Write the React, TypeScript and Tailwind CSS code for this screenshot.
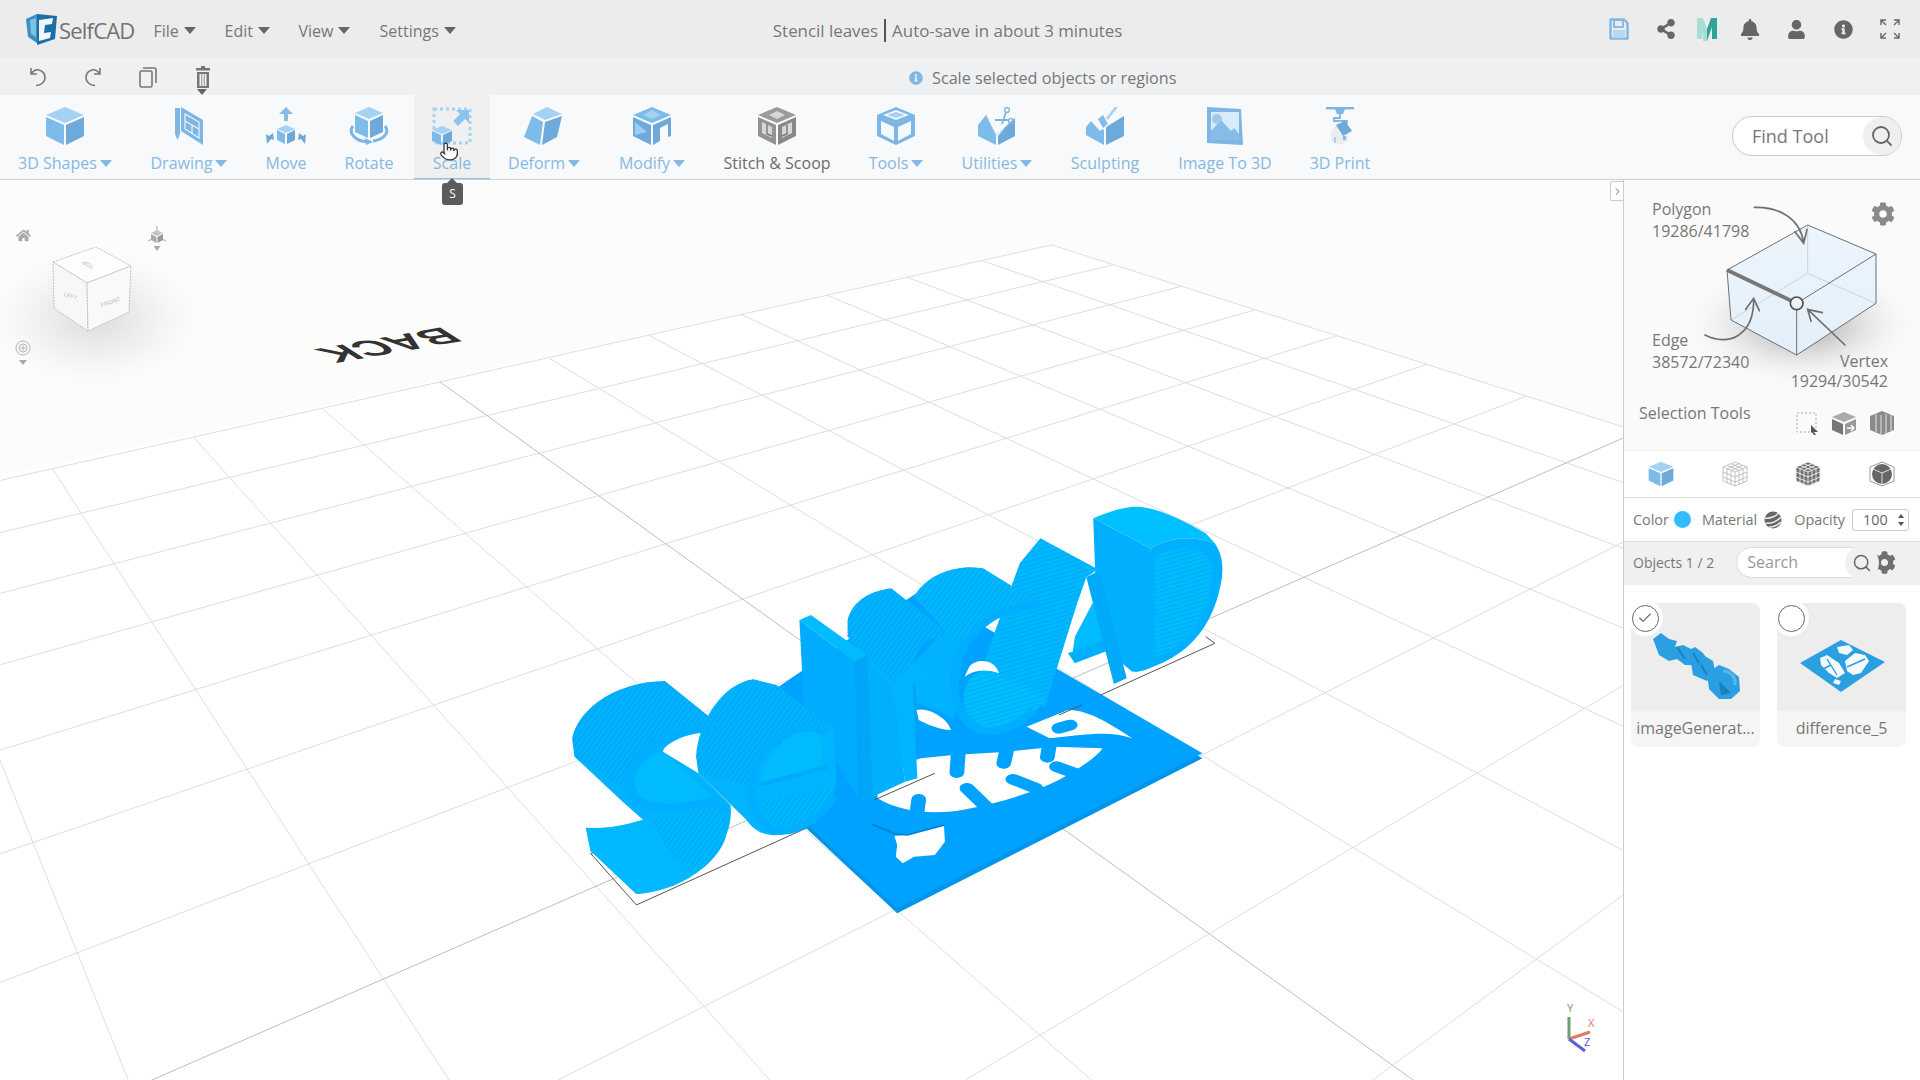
import { Search, Pointer, Check, ChevronRight } from "lucide-react";
import { FaBell, FaCog, FaHome, FaUser, FaShareAlt, FaInfoCircle } from "react-icons/fa";

// ground grid: maps grid cells on to the screen with a projective transform
const corners = [
  [1051.5, 244.9],
  [52.3, 468.7],
  [383.4, 979],
  [1638, 431.6],
];

function makeProjector() {
  const [[x0, y0], [x1, y1], [x2, y2], [x3, y3]] = corners;
  const dx1 = x1 - x2;
  const dx2 = x3 - x2;
  const sx = x0 - x1 + x2 - x3;
  const dy1 = y1 - y2;
  const dy2 = y3 - y2;
  const sy = y0 - y1 + y2 - y3;
  const det = dx1 * dy2 - dx2 * dy1;
  const g = (sx * dy2 - dx2 * sy) / det;
  const h = (dx1 * sy - sx * dy1) / det;
  const a = x1 - x0 + g * x1;
  const b = x3 - x0 + h * x3;
  const d = y1 - y0 + g * y1;
  const e = y3 - y0 + h * y3;
  return (u: number, v: number) => {
    const s = u / 10;
    const t = v / 7;
    const w = g * s + h * t + 1;
    if (w < 0.08) return null;
    return [(a * s + b * t + x0) / w, (d * s + e * t + y0) / w];
  };
}

function gridLines() {
  const project = makeProjector();
  const lines: { pts: string; major: boolean }[] = [];
  const build = (fn: (p: number) => number[] | null) => {
    const pts: string[] = [];
    for (let p = 0; p <= 14; p += 0.25) {
      const q = fn(p);
      if (q) pts.push(`${q[0].toFixed(1)},${q[1].toFixed(1)}`);
    }
    return pts.join(" ");
  };
  for (let i = 0; i <= 14; i++) {
    lines.push({ pts: build((p) => project(i, p)), major: i === 7 });
    lines.push({ pts: build((p) => project(p, i)), major: i === 7 });
  }
  return lines;
}

function Caret({ color = "border-t-[#666]", gap = "ml-[3px]" }: { color?: string; gap?: string }) {
  return <span className={`inline-block h-0 w-0 border-x-[6px] border-t-[7px] border-x-transparent ${gap} ${color}`} />;
}

function CubeIcon({ className = "h-[38px] w-[40px]" }: { className?: string }) {
  return (
    <svg viewBox="0 0 40 38" className={className}>
      <polygon points="20,0 39,8 20,16 1,8" fill="#a3d2f5" />
      <polygon points="1,10 19,18 19,38 1,29" fill="#7dbbe9" />
      <polygon points="21,18 39,10 39,29 21,38" fill="#6ea9d9" />
    </svg>
  );
}

function DrawingIcon() {
  return (
    <svg viewBox="0 0 40 38" className="h-[38px] w-[40px]">
      <rect x="6" y="1" width="5" height="26" fill="#7db6e4" />
      <polygon points="6,27 11,27 8.5,33" fill="#7db6e4" />
      <polygon points="12,0 34,13 34,38 12,24" fill="#7db6e4" />
      <path d="M16,7 L30,15 V31 L16,22 Z M16,14 L23,18 V26 M23,18 L30,22" fill="none" stroke="#f2f8fd" strokeWidth="1.1" />
    </svg>
  );
}

function MoveIcon() {
  return (
    <svg viewBox="0 0 40 38" className="h-[38px] w-[40px]">
      <polygon points="20,0 27,7 22,7 22,14 18,14 18,7 13,7" fill="#85bde8" />
      <polygon points="20,18 29,22 20,26 11,22" fill="#a3d2f5" />
      <polygon points="11,23 19,27 19,37 11,33" fill="#7dbbe9" />
      <polygon points="21,27 29,23 29,33 21,37" fill="#6ea9d9" />
      <polygon points="1,37 0,27 3,29 7,26 8,33 5,32" fill="#6ea9d9" />
      <polygon points="39,37 40,27 37,29 33,26 32,33 35,32" fill="#6ea9d9" />
    </svg>
  );
}

function RotateIcon() {
  return (
    <svg viewBox="0 0 40 38" className="h-[38px] w-[40px]">
      <polygon points="20,0 34,6 20,12 6,6" fill="#a3d2f5" />
      <polygon points="6,8 19,14 19,31 6,25" fill="#7dbbe9" />
      <polygon points="21,14 34,8 34,25 21,31" fill="#6ea9d9" />
      <path d="M4,19 C-2,27 8,34 18,35 M24,34 C32,33 42,27 36,19" fill="none" stroke="#7db6e4" strokeWidth="3" />
      <polygon points="16,31 24,35 17,38" fill="#7db6e4" />
    </svg>
  );
}

function ScaleIcon() {
  return (
    <svg viewBox="0 0 40 38" className="h-[38px] w-[40px]">
      <rect x="2" y="2" width="36" height="34" fill="none" stroke="#a3d2f5" strokeWidth="3" strokeDasharray="3 3" />
      <polygon points="24,3 37,3 37,16 33,12 26,19 21,14 28,7" fill="#8ec4ec" />
      <polygon points="10,19 20,23 10,27 0,23" fill="#a3d2f5" />
      <polygon points="0,24 9,28 9,38 0,34" fill="#7dbbe9" />
      <polygon points="11,28 20,24 20,34 11,38" fill="#6ea9d9" />
    </svg>
  );
}

function DeformIcon() {
  return (
    <svg viewBox="0 0 40 38" className="h-[38px] w-[40px]">
      <polygon points="23,0 38,7 21,13 9,7" fill="#a3d2f5" />
      <polygon points="8,9 19,15 16,38 0,30" fill="#7dbbe9" />
      <polygon points="21,15 38,9 33,30 18,38" fill="#6ea9d9" />
    </svg>
  );
}

function ModifyIcon() {
  return (
    <svg viewBox="0 0 40 38" className="h-[38px] w-[40px]">
      <polygon points="20,0 39,8 20,16 1,8" fill="#7dbbe9" />
      <polygon points="20,3 29,8 20,12 11,8" fill="#a3d2f5" />
      <polygon points="1,10 19,18 19,38 1,29" fill="#6ea9d9" />
      <polygon points="3,15 15,25 3,28" fill="#9ad0f5" />
      <polygon points="21,18 39,10 39,29 36,30 36,17 28,21 28,34 21,38" fill="#6ea9d9" />
    </svg>
  );
}

function StitchIcon() {
  return (
    <svg viewBox="0 0 40 38" className="h-[38px] w-[40px]">
      <polygon points="20,0 39,8 20,16 1,8" fill="#9b9b9b" />
      <polygon points="20,4 28,8 20,12 12,8" fill="#d6d6d6" />
      <polygon points="1,10 19,18 19,38 1,29" fill="#939393" />
      <polygon points="21,18 39,10 39,29 21,38" fill="#888" />
      <polygon points="5,15 15,20 15,31 5,26" fill="#d6d6d6" />
      <polygon points="25,20 35,15 35,26 25,31" fill="#d6d6d6" />
      <path d="M10,17 V27 L15,29 M30,18 V27 L25,29" stroke="#777" strokeWidth="1.4" fill="none" />
    </svg>
  );
}

function ToolsIcon() {
  return (
    <svg viewBox="0 0 40 38" className="h-[38px] w-[40px]">
      <polygon points="20,0 39,8 39,29 20,38 1,29 1,8" fill="#7db6e4" />
      <polygon points="20,3 33,8 20,13 7,8" fill="#f4f9fd" />
      <polygon points="5,14 18,20 18,34 5,27" fill="#f4f9fd" />
      <polygon points="22,20 35,14 35,27 22,34" fill="#f4f9fd" />
      <polygon points="20,5 29,8 20,11 11,8" fill="#a3d2f5" />
    </svg>
  );
}

function UtilitiesIcon() {
  return (
    <svg viewBox="0 0 40 38" className="h-[38px] w-[40px]">
      <polygon points="9,8 19,28 19,38 1,29 1,18" fill="#7dbbe9" />
      <polygon points="21,29 30,18 38,11 38,29 21,38" fill="#6ea9d9" />
      <path d="M9,8 L19,28 L38,12" fill="none" stroke="#9ccaea" strokeWidth="1" strokeDasharray="2 2" />
      <circle cx="30" cy="3" r="2.4" fill="none" stroke="#7db6e4" strokeWidth="1.4" />
      <circle cx="34" cy="14" r="2.4" fill="none" stroke="#7db6e4" strokeWidth="1.4" />
      <path d="M29,5 L25,17 M32,13 L18,13" stroke="#7db6e4" strokeWidth="1.8" />
    </svg>
  );
}

function SculptIcon() {
  return (
    <svg viewBox="0 0 40 38" className="h-[38px] w-[40px]">
      <polygon points="6,14 15,24 19,21 19,38 1,28 1,20" fill="#7dbbe9" />
      <polygon points="21,20 39,9 39,29 21,38" fill="#6ea9d9" />
      <polygon points="12,11 19,7 25,17 18,23" fill="#f4f9fd" />
      <polygon points="13,12 18,8 23,17 18,21" fill="#85bde8" />
      <path d="M22,12 L32,-1" stroke="#a3d2f5" strokeWidth="2.5" />
    </svg>
  );
}

function ImageIcon() {
  return (
    <svg viewBox="0 0 40 38" className="h-[38px] w-[40px]">
      <polygon points="2,0 36,2 38,38 2,36" fill="#7db6e4" />
      <polygon points="6,5 34,5 34,33 6,33" fill="#d7ebfa" />
      <polygon points="6,33 6,24 16,13 26,24 29,21 34,27 34,33" fill="#85bde8" />
      <circle cx="12" cy="12" r="5" fill="#9cc9ec" />
    </svg>
  );
}

function PrintIcon() {
  return (
    <svg viewBox="0 0 40 38" className="h-[38px] w-[40px]">
      <rect x="6" y="0" width="28" height="2.4" fill="#7db6e4" />
      <polygon points="15,2 25,2 23,7 17,7" fill="#7db6e4" />
      <path d="M20,7 V11 H14 V14 H27 V17" fill="none" stroke="#7db6e4" strokeWidth="1.8" />
      <polygon points="11,24 20,14 28,19 28,34 20,38 11,34" fill="#ececec" />
      <polygon points="16,18 25,14 32,24 23,29" fill="#6ea9d9" />
      <rect x="23" y="29" width="3" height="4" fill="#85bde8" />
      <rect x="14" y="30" width="2" height="6" fill="#a3d2f5" />
    </svg>
  );
}

const tools = [
  { label: "3D Shapes", icon: <CubeIcon />, caret: true, width: "w-[130px]" },
  { label: "Drawing", icon: <DrawingIcon />, caret: true, width: "w-[118px]" },
  { label: "Move", icon: <MoveIcon />, width: "w-[76px]" },
  { label: "Rotate", icon: <RotateIcon />, width: "w-[90px]" },
  { label: "Scale", icon: <ScaleIcon />, width: "w-[76px]", active: true },
  { label: "Deform", icon: <DeformIcon />, caret: true, width: "w-[108px]" },
  { label: "Modify", icon: <ModifyIcon />, caret: true, width: "w-[108px]" },
  { label: "Stitch & Scoop", icon: <StitchIcon />, width: "w-[142px]", gray: true },
  { label: "Tools", icon: <ToolsIcon />, caret: true, width: "w-[96px]" },
  { label: "Utilities", icon: <UtilitiesIcon />, caret: true, width: "w-[106px]" },
  { label: "Sculpting", icon: <SculptIcon />, width: "w-[110px]" },
  { label: "Image To 3D", icon: <ImageIcon />, width: "w-[130px]" },
  { label: "3D Print", icon: <PrintIcon />, width: "w-[100px]" },
];

function Logo() {
  return (
    <svg viewBox="0 0 32 32" className="h-[32px] w-[32px]">
      <polygon points="1,6 12,1 12,30 3,24" fill="#3f8fc4" />
      <polygon points="12,1 32,3 30,26 12,32" fill="#1b6fa8" />
      <path d="M14,7 L28,5 L27,11 L20,12 L19,20 L26,19 L25,25 L14,28 Z" fill="#f2f6f9" />
      <path d="M5,7 L11,5 V24 L6,21 Z" fill="#7fc0e6" />
    </svg>
  );
}

function TopBar() {
  return (
    <header className="flex h-[58px] items-center bg-[#ececed] text-[16px] text-[#777]">
      <div className="ml-[25px] flex items-center">
        <Logo />
        <span className="ml-[2px] pt-[3px] text-[22px] tracking-[-0.8px] text-[#6d747a]">SelfCAD</span>
      </div>
      <nav className="ml-[19px] flex items-center pt-[3px]">
        <span className="flex w-[71px] items-center">File<Caret gap="ml-[5px]" /></span>
        <span className="flex w-[74px] items-center">Edit<Caret gap="ml-[5px]" /></span>
        <span className="flex w-[81px] items-center">View<Caret gap="ml-[5px]" /></span>
        <span className="flex items-center">Settings<Caret gap="ml-[5px]" /></span>
      </nav>
      <div className="ml-[317px] flex items-center pt-[3px] text-[16.9px]">
        <span>Stencil leaves</span>
        <span className="mx-[6px] h-[23px] w-[2px] bg-[#555]" />
        <span>Auto-save in about 3 minutes</span>
      </div>
      <div className="ml-auto mr-[20px] flex items-center text-[#666]">
        <svg viewBox="0 0 20 24" className="h-[24px] w-[20px]">
          <path d="M1.5,2.5 H15 L18.5,6 V21.5 H1.5 Z" fill="none" stroke="#7fb8e6" strokeWidth="2.4" strokeLinejoin="round" />
          <rect x="5" y="3" width="9" height="7" fill="none" stroke="#7fb8e6" strokeWidth="1.8" />
          <rect x="4" y="13" width="12" height="8" fill="#b5d7f2" />
        </svg>
        <FaShareAlt className="ml-[27px] h-[20px] w-[20px]" />
        <svg viewBox="0 0 20 24" className="ml-[21px] h-[24px] w-[20px]">
          <polygon points="0,1 6,1 10,12 10,24 6,24 6,14 5,22 0,22" fill="#a9dcd4" />
          <polygon points="10,12 14,1 20,1 20,22 15,22 15,10 10,24" fill="#2fa595" />
        </svg>
        <FaBell className="ml-[23px] h-[21px] w-[20px]" />
        <FaUser className="ml-[27px] h-[19px] w-[19px]" />
        <FaInfoCircle className="ml-[28px] h-[19px] w-[19px]" />
        <svg viewBox="0 0 20 20" className="ml-[27px] h-[20px] w-[20px]" fill="none" stroke="#666" strokeWidth="1.4">
          <path d="M1,6 V1 H6 M1,1 L6,6 M14,1 H19 V6 M19,1 L14,6 M1,14 V19 H6 M1,19 L6,14 M14,19 H19 V14 M19,19 L14,14" />
        </svg>
      </div>
    </header>
  );
}

function ActionBar() {
  return (
    <div className="relative flex h-[37px] items-center bg-[#eff0f1] text-[#777]">
      <div className="ml-[29px] flex items-center">
        <svg viewBox="0 0 18 20" className="h-[20px] w-[18px]" fill="none" stroke="#777" strokeWidth="1.6">
          <path d="M2,1 V7 H8" />
          <path d="M2.5,6.5 C5,3 8,2.5 10,3 C14,4 16,7.5 16,11 C16,15 12,18.5 7,18.5" />
        </svg>
        <svg viewBox="0 0 18 20" className="ml-[37px] h-[20px] w-[18px]" fill="none" stroke="#777" strokeWidth="1.6">
          <path d="M16,1 V7 H10" />
          <path d="M15.5,6.5 C13,3 10,2.5 8,3 C4,4 2,7.5 2,11 C2,15 6,18.5 11,18.5" />
        </svg>
        <svg viewBox="0 0 18 22" className="ml-[37px] h-[22px] w-[18px]" fill="none" stroke="#777" strokeWidth="1.6">
          <rect x="1" y="5" width="12" height="16" rx="1.5" />
          <path d="M4,2 H15.5 a1.5,1.5 0 0 1 1.5,1.5 V17" />
        </svg>
        <svg viewBox="0 0 14 22" className="ml-[39px] h-[22px] w-[14px]" fill="#777">
          <path d="M5,0 H9 V2 H14 V4.5 H0 V2 H5 Z" />
          <path d="M1,6 H13 V22 H1 Z M3.5,8 V20 H5.5 V8 Z M6.2,8 V20 H7.8 V8 Z M8.5,8 V20 H10.5 V8 Z" fillRule="evenodd" />
        </svg>
      </div>
      <span className="absolute left-[197px] top-[31px] h-0 w-0 border-x-[5px] border-t-[6px] border-x-transparent border-t-[#666]" />
      <div className="ml-[699px] flex items-center pt-[3px] text-[16.2px]">
        <FaInfoCircle className="h-[14px] w-[14px] text-[#7fb8e6]" />
        <span className="ml-[9px]">Scale selected objects or regions</span>
      </div>
    </div>
  );
}

function ToolBar() {
  return (
    <div className="flex h-[85px] items-stretch border-b border-[#cfcfcf] bg-[#f8f9fa]">
      {tools.map((tool) => (
        <div
          key={tool.label}
          className={`relative flex shrink-0 flex-col items-center pt-[12px] ${tool.width} ${
            tool.active ? "bg-[#f0f0f0] shadow-[inset_0_-1px_0_#8cc0ea]" : ""
          } ${tool.gray ? "text-[#6b6b6b]" : "text-[#85b8e2]"}`}
        >
          {tool.icon}
          <span className="mt-[7px] flex items-center text-[16px] leading-[22px]">
            {tool.label}
            {tool.caret && <Caret color="border-t-[#85b8e2]" />}
          </span>
          {tool.active && (
            <>
              <Pointer className="absolute left-[25px] top-[45px] h-[23px] w-[20px] fill-white text-[#333]" strokeWidth={1.5} />
              <span className="absolute left-[28px] top-[88px] z-10 flex h-[22px] w-[21px] items-center justify-center rounded-[3px] bg-[#5c5c5c] text-[12px] text-white">
                S
              </span>
              <span className="absolute left-[33px] top-[83px] z-10 h-0 w-0 border-x-[5px] border-b-[5px] border-x-transparent border-b-[#5c5c5c]" />
            </>
          )}
        </div>
      ))}
      <div className="ml-auto mr-[18px] flex items-center pb-[2px]">
        <div className="flex h-[40px] w-[170px] items-center rounded-full border border-[#c9c9c9] bg-white pl-[19px] text-[18px] text-[#777]">
          Find Tool
          <span className="ml-auto flex h-[38px] w-[38px] items-center justify-center rounded-full bg-[#efefef]">
            <Search className="h-[24px] w-[24px] text-[#666]" strokeWidth={1.8} />
          </span>
        </div>
      </div>
    </div>
  );
}

function ModelDrawing() {
  return (
    <g transform="translate(540 480) scale(0.4591 0.3333)">
      {/* bounding box under the model */}
      <path d="M110,1120 L210,1275 L1470,490 L1450,470" fill="none" stroke="#555" vectorEffect="non-scaling-stroke" />
      <path d="M110,1120 L135,1115" fill="none" stroke="#555" vectorEffect="non-scaling-stroke" />
      {/* plate */}
      <polygon points="370,775 830,345 1443,835 778,1300" fill="#0095e8" />
      <polygon points="370,760 830,330 1443,820 778,1285" fill="#00a2ff" />
      <path d="M735,955 C735,920 745,880 770,860 L830,835 L900,825 L1020,815 L1120,800 L1225,805 C1215,830 1170,870 1130,900 C1070,940 1000,970 920,990 C860,1003 790,1000 735,955 Z" fill="#fff" />
      <path d="M1060,740 L1150,690 C1190,690 1230,720 1290,775 C1240,750 1180,765 1110,775 Z" fill="#fff" />
      <path d="M820,690 C850,680 890,720 895,750 C870,750 840,730 825,720 Z" fill="#fff" />
      <path d="M728,960 L860,880 M1130,705 L1180,675" stroke="#555" fill="none" vectorEffect="non-scaling-stroke" />
      <g stroke="#00a2ff" strokeWidth="32" strokeLinecap="round" fill="none">
        <path d="M912,800 L908,878" />
        <path d="M1020,790 L1010,850" />
        <path d="M1110,790 L1105,832" />
        <path d="M1125,860 L1165,880" />
        <path d="M1030,898 L1080,925" />
        <path d="M930,925 L975,985" />
        <path d="M825,958 L820,1010" />
        <path d="M1130,745 L1155,735" />
      </g>
      <path d="M772,1068 L800,1065 L880,1038 L882,1085 L860,1125 L815,1130 L790,1150 L775,1130 L778,1095 Z" fill="#fff" />
      <path d="M722,1032 L770,1060 L800,1065 L880,1035" stroke="#0082d0" strokeWidth="5" fill="none" />

      {/* D */}
      <path d="M1205,115 L1330,205 L1320,570 L1290,575 L1215,490 Z" fill="#00b0ff" />
      <path d="M1205,115 C1240,95 1270,80 1300,80 C1340,80 1400,120 1450,160 L1470,190 C1430,170 1380,165 1330,205 Z" fill="#00c0ff" />
      <path d="M1330,205 C1380,165 1430,170 1470,190 C1490,230 1490,280 1480,330 C1465,420 1430,490 1380,530 C1350,555 1320,570 1295,577 Z" fill="#00b0ff" />
      <path d="M1340,230 C1380,195 1430,195 1450,225 C1470,255 1470,300 1450,380 C1430,450 1390,510 1340,535 Z" fill="#00bcff" />
      <path d="M1340,230 C1380,195 1430,195 1450,225 C1470,255 1470,300 1450,380 C1430,450 1390,510 1340,535 Z" fill="url(#stripesB)" />

      {/* A */}
      <path d="M1045,250 L1090,175 L1215,268 L1190,292 L1170,370 L1120,590 L1100,680 L950,610 Z" fill="#00b8ff" />
      <path d="M1045,250 L1090,175 L1215,268 L1190,292 L1170,370 L1120,590 L1100,680 L950,610 Z" fill="url(#stripesB)" />
      <path d="M1165,470 L1215,340 L1230,480 L1160,520 Z" fill="#00bcff" />
      <path d="M1150,520 L1230,480 L1240,510 L1165,550 Z" fill="#00aeff" />
      <path d="M1190,292 L1217,272 L1278,595 L1250,612 Z" fill="#00aaf8" />

      {/* c */}
      <polygon points="815,550 880,450 925,500 900,720 880,700 820,670" fill="#00b2ff" />
      <path d="M815,350 C840,290 890,262 940,262 L965,265 L1090,370 L1060,385 C1000,390 950,430 925,500 L880,450 Z" fill="#00b8ff" />
      <path d="M815,350 C840,290 890,262 940,262 L965,265 L1090,370 L1060,385 C1000,390 950,430 925,500 L880,450 Z" fill="url(#stripesA)" />
      <path d="M935,560 C950,535 990,535 1000,580 C970,565 945,570 925,590 Z" fill="#fff" />
      <path d="M925,630 C930,590 960,565 985,575 L1100,660 C1080,700 1030,760 975,745 C935,730 915,680 925,630 Z" fill="#00beff" />
      <path d="M925,630 C930,590 960,565 985,575 L1100,660 C1080,700 1030,760 975,745 C935,730 915,680 925,630 Z" fill="url(#stripesB)" />
      <path d="M1085,375 C1020,375 950,420 915,520 C890,600 900,700 950,745 C990,770 1040,740 1075,690" fill="none" stroke="#00aeff" strokeWidth="20" />

      {/* f */}
      <polygon points="685,470 770,610 795,905 725,950 712,525" fill="#00b0ff" />
      <path d="M670,420 C680,370 710,335 765,325 L880,450 L878,470 C845,470 820,500 815,550 L860,565 L865,590 L812,612 L822,895 L795,905 L770,640 L765,620 L670,470 Z" fill="#00b4ff" />
      <path d="M670,420 C680,370 710,335 765,325 L880,450 L878,470 C845,470 820,500 815,550 L770,610 L670,470 Z" fill="url(#stripesA)" />

      {/* l */}
      <polygon points="565,420 685,545 695,960 575,680" fill="#00acff" />
      <polygon points="565,420 590,405 712,525 685,545" fill="#00bbff" />
      <polygon points="685,545 712,525 725,950 700,965" fill="#00a6f8" />

      {/* e */}
      <path d="M340,830 C345,720 400,610 465,598 L515,615 L640,745 L645,900 C640,980 600,1040 540,1060 C500,1075 470,1060 450,1020 L345,880 Z" fill="#00b4ff" />
      <path d="M340,830 C345,720 400,610 465,598 L515,615 L640,745 L600,760 C530,770 480,820 460,920 L345,880 Z" fill="url(#stripesA)" />
      <path d="M480,905 C490,830 530,760 590,750 C610,750 615,770 615,860 Z" fill="#00bcff" />
      <path d="M485,960 L640,925 C620,990 570,1040 525,1040 C495,1040 480,1000 485,960 Z" fill="#00b8ff" />
      <path d="M485,960 L640,925 C620,990 570,1040 525,1040 C495,1040 480,1000 485,960 Z" fill="url(#stripesA)" />
      <path d="M620,760 C570,720 490,770 465,880 C450,960 470,1040 520,1055 C570,1060 620,1000 640,950" fill="none" stroke="#00aeff" strokeWidth="18" />
      <path d="M475,915 L625,862" stroke="#00aafa" strokeWidth="12" />

      {/* S */}
      <path d="M70,775 C85,680 170,605 272,603 L385,728 L390,750 C330,750 270,790 268,815 L345,880 L415,975 C425,1100 340,1215 210,1242 L110,1112 L100,1043 C140,1050 190,1035 225,1020 L180,965 L75,830 Z" fill="#00b2ff" />
      <path d="M70,775 C85,680 170,605 272,603 L385,728 L300,745 C250,770 210,810 190,930 L75,830 Z" fill="url(#stripesA)" />
      <path d="M268,815 L375,950 L300,975 C240,990 205,960 205,920 C205,870 230,830 268,815 Z" fill="#00bcff" />
      <path d="M100,1043 C150,1050 200,1030 235,1015 C290,1010 340,1000 385,960 C420,1000 425,1100 340,1180 C300,1220 250,1240 210,1242 L110,1112 Z" fill="#00b8ff" />
      <path d="M240,1020 C290,1010 340,1000 385,960 C420,1000 425,1100 340,1180 L290,1130 Z" fill="url(#stripesA)" />
      <path d="M385,745 C300,745 205,800 195,900 C190,990 280,990 330,975 C370,960 395,975 402,1000" fill="none" stroke="#00aeff" strokeWidth="22" />
    </g>
  );
}

function Viewport() {
  const lines = gridLines();
  return (
    <div className="relative min-w-0 flex-1 overflow-hidden bg-[#fcfcfa]">
      <svg viewBox="0 180 1623 900" className="block h-full w-full">
        <defs>
          <pattern id="stripesA" width="10" height="10" patternUnits="userSpaceOnUse" patternTransform="rotate(28)">
            <rect width="3" height="10" fill="#0090e0" opacity="0.4" />
          </pattern>
          <pattern id="stripesB" width="12" height="12" patternUnits="userSpaceOnUse" patternTransform="rotate(68)">
            <rect width="3" height="12" fill="#0090e0" opacity="0.4" />
          </pattern>
          <radialGradient id="cubeShadow">
            <stop offset="0" stopColor="#bdbdbd" stopOpacity="0.55" />
            <stop offset="0.55" stopColor="#d8d8d8" stopOpacity="0.3" />
            <stop offset="1" stopColor="#f4f4f4" stopOpacity="0" />
          </radialGradient>
        </defs>
        <polygon points="-40,485 1051.5,244.9 1660,439 1660,1100 -40,1100" fill="#fff" />
        {lines.filter((l) => !l.major).map((l, i) => (
          <polyline key={i} points={l.pts} fill="none" stroke="#dedede" strokeWidth="1" />
        ))}
        {lines.filter((l) => l.major).map((l, i) => (
          <polyline key={i} points={l.pts} fill="none" stroke="#bebebe" strokeWidth="1" />
        ))}
        <ellipse cx="95" cy="318" rx="110" ry="72" fill="url(#cubeShadow)" />
        {/* orientation cube */}
        <g stroke="#aaa" strokeWidth="0.7" strokeDasharray="2 1" fill="#fdfdfd">
          <polygon points="53,262 96,247 131,266 87,283" />
          <polygon points="53,262 87,283 88,331 54,308" fill="#f7f7f7" />
          <polygon points="87,283 131,266 129,312 88,331" fill="#f9f9f9" />
        </g>
        <g fontFamily="Liberation Sans, sans-serif" fontSize="6" fill="#bbb">
          <text x="84" y="267" transform="rotate(-150 89 265)">TOP</text>
          <text x="64" y="297" transform="rotate(18 68 295)" fontSize="5.5">LEFT</text>
          <text x="100" y="305" transform="rotate(-20 108 302)">FRONT</text>
        </g>
        <text
          transform="matrix(-1.5 0.26 -1.05 -0.66 443 327)"
          fontFamily="Liberation Sans, sans-serif"
          fontWeight="700"
          fontSize="30"
          fill="#333"
        >
          BACK
        </text>
        <ModelDrawing />
        {/* axis gizmo */}
        <path d="M1569,1039 V1017" stroke="#6aa06a" strokeWidth="3" />
        <path d="M1569,1039 L1590,1032" stroke="#e0796c" strokeWidth="3" />
        <path d="M1569,1039 L1585,1051" stroke="#5a60d8" strokeWidth="3" />
        <g fontFamily="Open Sans, sans-serif" fontSize="11">
          <text x="1567" y="1012" fill="#6aa06a">Y</text>
          <text x="1588" y="1027" fill="#e0796c">X</text>
          <text x="1584" y="1046" fill="#5a60d8">Z</text>
        </g>
      </svg>
      <FaHome className="absolute left-[16px] top-[48px] h-[15px] w-[15px] text-[#aaa]" />
      <svg viewBox="0 0 18 26" className="absolute left-[148px] top-[46px] h-[26px] w-[18px]">
        <path d="M9,0 V5 M0,15 L4,13 M18,15 L14,13" stroke="#aaa" />
        <polygon points="9,4 15,7 9,10 3,7" fill="#c4c4c4" />
        <polygon points="3,8 8.5,11 8.5,17 3,14" fill="#aaa" />
        <polygon points="9.5,11 15,8 15,14 9.5,17" fill="#999" />
        <polygon points="5.5,20 12.5,20 9,25" fill="#aaa" />
      </svg>
      <svg viewBox="0 0 16 28" className="absolute left-[15px] top-[160px] h-[28px] w-[16px]" fill="none" stroke="#b5b5b5">
        <circle cx="8" cy="8" r="7" />
        <circle cx="8" cy="8" r="4" />
        <path d="M8,5.5 V10.5 M5.5,8 H10.5" />
        <polygon points="4,20 12,20 8,25" fill="#aaa" stroke="none" />
      </svg>
      <span className="absolute right-0 top-[1px] flex h-[20px] w-[13px] items-center justify-center rounded-l-[2px] border border-r-0 border-[#ccc] bg-white text-[#666]">
        <ChevronRight className="h-[11px] w-[11px]" />
      </span>
    </div>
  );
}

function SelectionCube() {
  return (
    <svg viewBox="0 0 900 780" className="absolute left-[-3px] top-0 h-[260px] w-[300px]">
      <defs>
        <radialGradient id="panelShadow">
          <stop offset="0" stopColor="#8f8f8f" stopOpacity="0.9" />
          <stop offset="0.5" stopColor="#c4c4c4" stopOpacity="0.5" />
          <stop offset="1" stopColor="#f5f5f5" stopOpacity="0" />
        </radialGradient>
        <linearGradient id="faceFill" x1="0" y1="0" x2="0" y2="1">
          <stop offset="0" stopColor="#edf5fc" />
          <stop offset="1" stopColor="#e3eff9" />
        </linearGradient>
      </defs>
      <ellipse cx="540" cy="430" rx="350" ry="190" fill="url(#panelShadow)" />
      <polygon points="318,270 560,135 765,222 765,370 527,525 330,420" fill="url(#faceFill)" />
      <g fill="none" stroke="#c4ccd4" strokeWidth="2.5">
        <path d="M560,135 V280 L330,420 M560,280 L765,370" />
      </g>
      <g fill="none" stroke="#6b7075" strokeWidth="3">
        <path d="M318,270 L560,135 L765,222 L527,370 M765,222 L765,370 L527,525 L330,420 L318,270 M527,370 V525" />
      </g>
      <path d="M318,270 L527,370" stroke="#777" strokeWidth="11" />
      <circle cx="527" cy="370" r="19" fill="#eef2f5" stroke="#4f5358" strokeWidth="5" />
      <g fill="none" stroke="#6f6f6f" strokeWidth="5" strokeLinecap="round">
        <path d="M400,82 C480,80 540,120 548,190 M522,155 L548,190 L558,148" />
        <path d="M252,465 C320,500 400,470 398,355 M374,388 L398,355 L415,392" />
        <path d="M672,495 L560,388 M604,398 L560,388 L570,424" />
      </g>
    </svg>
  );
}

function ObjectCard({ name, selected, children }: { name: string; selected?: boolean; children: React.ReactNode }) {
  return (
    <div className="relative h-[144px] w-[129px] overflow-hidden rounded-[8px] bg-[#f5f5f5]">
      <div className="h-[108px] bg-[#ededed]">{children}</div>
      <div className="flex h-[34px] items-center justify-center text-[16px] text-[#777]">{name}</div>
      <span className="absolute left-[-4px] top-[-3px] flex h-[36px] w-[36px] items-center justify-center rounded-full bg-white">
        <span className="flex h-[27px] w-[27px] items-center justify-center rounded-full border border-[#666] bg-white">
          {selected && <Check className="h-[16px] w-[16px] text-[#666]" strokeWidth={1.6} />}
        </span>
      </span>
    </div>
  );
}

function RightPanel() {
  return (
    <aside className="flex w-[297px] shrink-0 flex-col border-l border-[#ccc] bg-white text-[#777]">
      <section className="relative h-[271px] border-b border-[#eee] bg-[#fafafa]">
        <SelectionCube />
        <div className="absolute left-[28px] top-[18px] text-[16px] leading-[22px]">
          Polygon
          <br />
          19286/41798
        </div>
        <div className="absolute left-[28px] top-[149px] text-[16px] leading-[22px]">
          Edge
          <br />
          38572/72340
        </div>
        <div className="absolute right-[32px] top-[171px] text-right text-[16px] leading-[20px]">
          Vertex
          <br />
          19294/30542
        </div>
        <FaCog className="absolute left-[247px] top-[22px] h-[24px] w-[24px] text-[#8a8a8a]" />
        <div className="absolute left-[15px] top-[221px] text-[16px]">Selection Tools</div>
        <div className="absolute right-[26px] top-[231px] flex items-center">
          <svg viewBox="0 0 24 24" className="h-[24px] w-[24px]">
            <rect x="2" y="2" width="19" height="19" fill="none" stroke="#aaa" strokeDasharray="2 2" />
            <polygon points="16,14 23,21 19,21 21,24 19,24 17,21 16,22" fill="#555" />
          </svg>
          <svg viewBox="0 0 24 24" className="ml-[13px] h-[24px] w-[24px]">
            <polygon points="12,1 24,6 12,11 0,6" fill="#aaa" />
            <polygon points="0,8 11,13 11,24 0,19" fill="#777" />
            <polygon points="13,13 24,8 24,19 13,24" fill="#999" />
            <path d="M15,17 H22 M19,14 L22,17 L19,20" stroke="#fff" fill="none" strokeWidth="1.4" />
          </svg>
          <svg viewBox="0 0 24 24" className="ml-[14px] h-[24px] w-[24px]">
            <polygon points="12,0 24,5 24,19 12,24 0,19 0,5" fill="#8a8a8a" />
            <path d="M6,3 V21 M11,4 V24 M16,3 V22 M21,3 V20" stroke="#e4e4e4" />
          </svg>
        </div>
      </section>

      <div className="flex h-[47px] items-center justify-around border-b border-[#ddd] pr-[1px]">
        <CubeIcon className="h-[26px] w-[26px]" />
        <svg viewBox="0 0 26 26" className="h-[26px] w-[26px]" fill="none" stroke="#b5b5b5" strokeWidth="0.8">
          <polygon points="13,1 25,6 25,20 13,25 1,20 1,6" />
          <path d="M1,6 L13,11 L25,6 M13,11 V25 M5,4.3 L17,9.3 M9,2.7 L21,7.7 M17,2.7 L5,7.7 M21,4.3 L9,9.3 M5,8 V22 M9,9.5 V23.5 M17,9.5 V23.5 M21,8 V22 M1,11 L13,16 L25,11 M1,16 L13,21 L25,16" />
        </svg>
        <svg viewBox="0 0 26 26" className="h-[26px] w-[26px]" fill="#707070" stroke="#eee" strokeWidth="0.9">
          <polygon points="13,1 25,6 25,20 13,25 1,20 1,6" />
          <path d="M1,6 L13,11 L25,6 M13,11 V25 M5,4.3 L17,9.3 M9,2.7 L21,7.7 M17,2.7 L5,7.7 M21,4.3 L9,9.3 M5,8 V22 M9,9.5 V23.5 M17,9.5 V23.5 M21,8 V22 M1,11 L13,16 L25,11 M1,16 L13,21 L25,16" fill="none" />
        </svg>
        <svg viewBox="0 0 26 26" className="h-[26px] w-[26px]">
          <polygon points="13,1 25,6 25,20 13,25 1,20 1,6" fill="none" stroke="#999" />
          <circle cx="13" cy="13" r="10" fill="#666" />
          <path d="M4,8 L13,12 L22,8 M13,12 V23" stroke="#ddd" fill="none" />
        </svg>
      </div>

      <div className="flex h-[44px] items-center border-b border-[#ddd] pl-[9px] text-[14.4px]">
        Color
        <span className="ml-[5px] h-[17px] w-[17px] rounded-full bg-[#33bbff]" />
        <span className="ml-[11px]">Material</span>
        <svg viewBox="0 0 18 18" className="ml-[7px] h-[18px] w-[18px]">
          <circle cx="9" cy="9" r="8.5" fill="#666" />
          <path d="M1,7 C6,8 12,5 15,2 M1.5,12 C7,13 13,10 17,6 M5,16 C9,16 14,14 16.5,11" stroke="#eee" strokeWidth="1.5" fill="none" />
        </svg>
        <span className="ml-[12px]">Opacity</span>
        <div className="ml-[7px] flex h-[22px] w-[57px] items-center rounded-[3px] border border-[#ccc] pl-[10px] text-[#666]">
          100
          <span className="ml-auto mr-[4px] flex flex-col gap-[4px]">
            <span className="h-0 w-0 border-x-[3px] border-b-[4px] border-x-transparent border-b-[#555]" />
            <span className="h-0 w-0 border-x-[3px] border-t-[4px] border-x-transparent border-t-[#555]" />
          </span>
        </div>
      </div>

      <div className="flex h-[43px] items-center bg-[#f0f0f0] pb-[3px] pl-[9px] text-[14px]">
        Objects 1 / 2
        <div className="relative ml-[22px] flex h-[31px] w-[132px] items-center rounded-full border border-[#ddd] bg-white pl-[10px] text-[16px] text-[#999]">
          Search
          <span className="absolute right-[-12px] top-[-2px] flex h-[34px] w-[34px] items-center justify-center rounded-full bg-[#f0f0f0]">
            <Search className="h-[20px] w-[20px] text-[#666]" strokeWidth={1.8} />
          </span>
        </div>
        <FaCog className="ml-[5px] h-[23px] w-[23px] text-[#707070]" />
      </div>

      <div className="flex gap-[17px] pl-[7px] pt-[18px]">
        <ObjectCard name="imageGenerat..." selected>
          <svg viewBox="0 0 129 108" className="h-[108px] w-[129px]">
            <g fill="#2a9fe2">
              <path d="M22,36 L30,30 L38,36 L46,38 L44,44 L52,42 L60,46 L64,44 L72,50 L76,56 L70,62 L62,62 L54,62 L46,56 L38,58 L28,52 Z" />
              <path d="M60,60 L72,52 L82,58 L84,68 L76,78 L62,72 Z" />
              <path d="M76,70 L88,62 L98,66 L108,74 L109,88 L100,96 L88,96 L78,86 Z" />
            </g>
            <path d="M88,78 L100,90 L90,92 Z" fill="#1c7fc0" />
            <path d="M92,68 A12,12 0 0 1 104,82" fill="none" stroke="#5ab8ec" strokeWidth="3" />
            <path d="M46,44 L54,56 M62,50 L68,60 M70,62 L76,72" stroke="#1c7fc0" strokeWidth="2" />
          </svg>
        </ObjectCard>
        <ObjectCard name="difference_5">
          <svg viewBox="0 0 129 108" className="h-[108px] w-[129px]">
            <polygon points="23,60 64,37 108,59 64,89" fill="#2a9fe2" />
            <path d="M43,55 L50,52 L56,56 L62,60 L68,70 L60,75 L52,70 L44,62 Z M68,58 L78,50 L88,52 L92,58 L84,70 L76,72 L70,68 Z M60,44 L72,42 L76,47 L70,52 L62,50 Z" fill="#f4fafd" />
            <path d="M50,56 L60,72 M70,64 L88,56 M54,62 L46,66" stroke="#2a9fe2" strokeWidth="1.4" />
            <path d="M56,80 L62,82 L64,78 L58,76 Z" fill="#f4fafd" />
          </svg>
        </ObjectCard>
      </div>
    </aside>
  );
}

export default function App() {
  return (
    <div className="flex h-[1080px] w-[1920px] flex-col overflow-hidden bg-white font-['Open_Sans',sans-serif]">
      <TopBar />
      <ActionBar />
      <ToolBar />
      <div className="flex min-h-0 flex-1">
        <Viewport />
        <RightPanel />
      </div>
    </div>
  );
}
